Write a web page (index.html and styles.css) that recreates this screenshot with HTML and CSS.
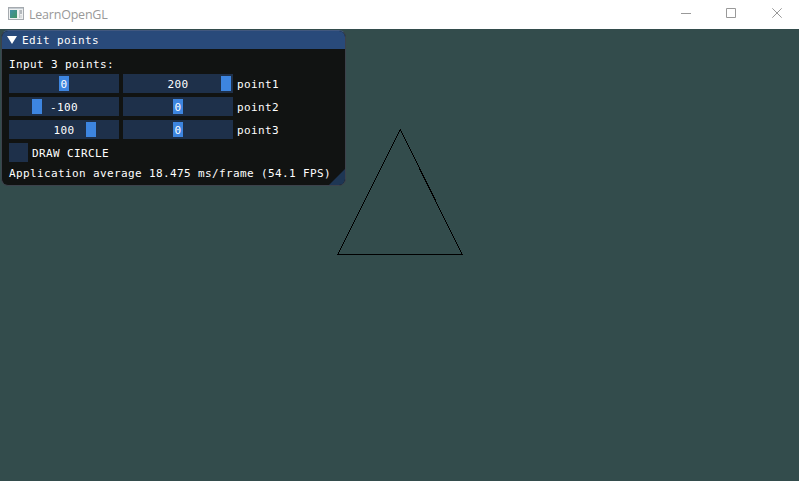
FILE: index.html
```html
<!DOCTYPE html>
<html lang="en">
<head>
<meta charset="utf-8">
<title>LearnOpenGL</title>
<link rel="stylesheet" href="styles.css">
</head>
<body>
<header class="titlebar">
  <svg class="app-icon" width="16" height="14" viewBox="0 0 16 14">
    <defs><linearGradient id="screen" x1="0" y1="0" x2="1" y2="1"><stop offset="0" stop-color="#438fa8"/><stop offset="1" stop-color="#409461"/></linearGradient></defs>
    <rect x=".5" y=".5" width="15" height="12" fill="#eef0f0" stroke="#a5aaaf"/>
    <rect x="1" y="1" width="14" height="1" fill="#c4cbd1"/>
    <rect x="2" y="3" width="7" height="8" fill="url(#screen)"/>
    <rect x="11" y="3" width="1" height="8" fill="#c5c9cc"/>
    <rect x="12" y="3" width="2" height="4" fill="#b4b9bd"/>
    <rect x="12" y="8" width="2" height="3" fill="#dadcde"/>
  </svg>
  <span class="app-name">LearnOpenGL</span>
  <div class="controls">
    <svg width="10" height="10"><path d="M0 5.5H10"/></svg>
    <svg width="10" height="10"><path d="M.5 .5H9.5V9.5H.5Z"/></svg>
    <svg class="close" width="10" height="10"><path d="M.3 .3L9.7 9.7M9.7 .3L.3 9.7"/></svg>
  </div>
</header>
<main class="viewport">
  <svg class="scene" width="799" height="452" viewBox="0 29 799 452"><path d="M400.2 129.5L337.8 254.5H462.3Z" shape-rendering="crispEdges"/></svg>
  <section class="panel">
    <div class="panel-title"><svg width="10" height="8"><path d="M0 0H10L5 8Z"/></svg><span>Edit points</span></div>
    <div class="panel-body">
      <div class="line">Input 3 points:</div>
      <div class="row"><div class="slider center"><i></i><span>0</span></div><div class="slider max"><i></i><span>200</span></div><span class="label">point1</span></div>
      <div class="row"><div class="slider low"><i></i><span>-100</span></div><div class="slider center"><i></i><span>0</span></div><span class="label">point2</span></div>
      <div class="row"><div class="slider high"><i></i><span>100</span></div><div class="slider center"><i></i><span>0</span></div><span class="label">point3</span></div>
      <div class="row"><div class="checkbox"></div><span class="label">DRAW CIRCLE</span></div>
      <div class="line">Application average 18.475 ms/frame (54.1 FPS)</div>
    </div>
    <svg class="grip" width="16" height="16"><path d="M16 0V16H0Z"/></svg>
  </section>
</main>
</body>
</html>
```
FILE: styles.css
```css
* { box-sizing: border-box; }
body { margin: 0; width: 799px; height: 481px; overflow: hidden; background: #334c4c; }
.titlebar { display: flex; align-items: center; height: 29px; padding: 0 17px 0 8px; background: #fff; }
.app-icon { display: block; margin-top: -2px; }
.app-name { margin-left: 5px; font: 12.5px/16px "Open Sans", "Noto Sans", sans-serif; letter-spacing: -.22px; color: #999; }
.controls { display: flex; gap: 35px; margin-left: auto; margin-top: -3px; }
.controls svg { display: block; fill: none; stroke: #999; }
.controls .close { margin-left: 1px; }
.viewport { position: relative; height: 452px; }
.scene { position: absolute; left: 0; top: 0; fill: none; stroke: #000; }
.panel { position: absolute; left: 1px; top: 1px; width: 345px; height: 156px; border: 1px solid #42506a; border-color: #42587e #3c424b #3c424b; border-radius: 7px; overflow: hidden; background: #111312; color: #fff; font: 11px/13px "DejaVu Sans Mono", monospace; letter-spacing: .378px; white-space: nowrap; }
.panel-title { display: flex; align-items: center; height: 18px; padding-left: 5px; gap: 5px; background: #294a7a; }
.panel-title svg { display: block; fill: #fff; margin-top: -1px; }
.panel-body { display: flex; flex-direction: column; gap: 4px; padding: 8px 7px; }
.line { height: 13px; line-height: 15px; }
.row { display: flex; align-items: center; gap: 4px; height: 19px; }
.label { padding-top: 2px; }
.slider { position: relative; width: 110px; height: 19px; line-height: 21px; text-align: center; background: #1e304a; }
.slider span { position: relative; }
.slider i { position: absolute; top: 2px; width: 10px; height: 15px; background: #3d85e0; }
.center i { left: 50px; }
.max i { left: 98px; }
.low i { left: 23px; }
.high i { left: 77px; }
.checkbox { width: 19px; height: 19px; background: #1e304a; }
.grip { position: absolute; right: 0; bottom: 0; fill: #1e3654; }
```
